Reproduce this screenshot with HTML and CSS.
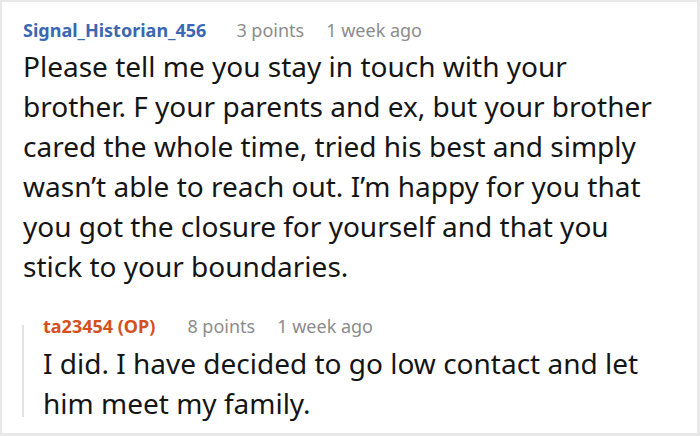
FILE: index.html
```html
<!DOCTYPE html>
<html>
<head>
<meta charset="utf-8">
<link rel="stylesheet" href="styles.css">
</head>
<body>
<div class="card">
  <div class="comment">
    <div class="meta">
      <span class="author">Signal_Historian_456</span>
      <span class="points">3 points</span>
      <span class="time">1 week ago</span>
    </div>
    <p class="text">Please tell me you stay in touch with your brother. F your parents and ex, but your brother cared the whole time, tried his best and simply wasn’t able to reach out. I’m happy for you that you got the closure for yourself and that you stick to your boundaries.</p>
  </div>
  <div class="reply">
    <div class="meta">
      <span class="author op">ta23454 (OP)</span>
      <span class="points">8 points</span>
      <span class="time">1 week ago</span>
    </div>
    <p class="text reply-text">I did. I have decided to go low contact and let him meet my family.</p>
  </div>
</div>
</body>
</html>
```
FILE: styles.css
```css
html, body {
  margin: 0;
  padding: 0;
  background: #fff;
}
body {
  font-family: "Noto Sans", "Open Sans", sans-serif;
  color: #151515;
}
.card {
  box-sizing: border-box;
  width: 700px;
  height: 436px;
  border-style: solid;
  border-color: #e8e8e8;
  border-width: 2px 3px 3px 2px;
  padding: 16px 29px 0 21px;
  overflow: hidden;
}
.meta {
  display: flex;
  align-items: baseline;
  font-size: 18px;
  line-height: 24px;
  color: #8c8c8c;
  white-space: nowrap;
}
.author {
  font-weight: 700;
  color: #3a68b3;
  margin-right: 30px;
}
.author.op {
  color: #d4501c;
  margin-right: 32px;
}
.points {
  margin-right: 22px;
}
.text {
  margin: 4px 0 0 0;
  font-size: 28px;
  line-height: 40px;
  color: #151515;
}
.comment {
  padding-bottom: 28px;
}
.reply {
  position: relative;
  padding-left: 20px;
}
.reply::before {
  content: "";
  position: absolute;
  left: -1px;
  top: 11px;
  height: 92px;
  width: 2px;
  background: #e4e4e4;
}
.reply-text {
  margin-top: 5px;
  line-height: 40px;
}
```
